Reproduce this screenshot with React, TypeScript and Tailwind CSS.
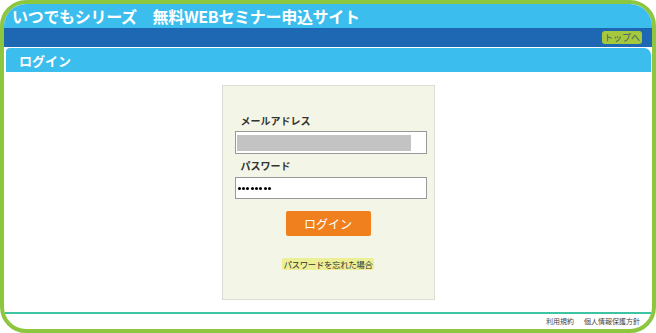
export default function App() {
  return (
    <div
      className="w-[656px] h-[333px] bg-white"
      style={{ fontFamily: '"Noto Sans CJK JP", "Noto Sans", sans-serif' }}
    >
      <div className="w-full h-full border-4 border-[#8dc63f] rounded-[26px] overflow-hidden flex flex-col bg-white">
        {/* title bar */}
        <div className="h-[24px] shrink-0 bg-[#3bbdee] pl-[8px] flex items-center">
          <h1 className="text-white font-bold text-[16px] leading-none tracking-[-0.3px]">
            いつでもシリーズ　無料WEBセミナー申込サイト
          </h1>
        </div>

        {/* nav bar */}
        <div className="h-[19px] shrink-0 bg-[#1e68b3] flex items-center justify-end pr-[10px]">
          <button className="h-[13px] px-[2px] rounded-[3px] bg-[#a6c83c] text-[#3a5a6a] text-[9px] leading-none">
            トップへ
          </button>
        </div>

        {/* tab */}
        <div className="h-[24px] shrink-0 mt-px ml-[2px] mr-px bg-[#3bbdee] rounded-tl-[4px] rounded-tr-[7px] flex items-center pl-[13px]">
          <span className="text-white font-bold text-[13px] leading-none">ログイン</span>
        </div>

        {/* content */}
        <div className="flex-1 flex justify-center pt-[13px]">
          <div className="w-[213px] h-[215px] bg-[#f3f6e6] border border-[#dddcd6] flex flex-col items-center pt-[28px]">
            <div className="w-[192px] ml-[5px]">
              <label className="block pl-[6px] text-[10px] font-bold text-[#333] leading-[14px]">
                メールアドレス
              </label>
              <div className="mt-[3px] h-[23px] bg-white border border-[#999] flex items-center px-px">
                <div className="w-[174px] h-[16px] bg-[#c3c3c3]" />
              </div>
              <label className="block mt-[5px] pl-[6px] text-[10px] font-bold text-[#333] leading-[14px]">
                パスワード
              </label>
              <div className="mt-[4px] h-[22px] bg-white border border-[#999] flex items-center pl-[2px] gap-[1.4px]">
                {Array.from({ length: 8 }).map((_, i) => (
                  <span key={i} className="w-[3px] h-[3px] rounded-full bg-black" />
                ))}
              </div>
            </div>

            <button className="mt-[12px] w-[85px] h-[25px] bg-[#f07f1e] rounded-[2px] text-white text-[12px] leading-none">
              ログイン
            </button>

            <a className="mt-[22px] px-[1px] h-[12px] bg-[#ecef96] rounded-[2px] text-[8.5px] text-[#333] leading-[12px] tracking-[-0.4px]">
              パスワードを忘れた場合
            </a>
          </div>
        </div>

        {/* footer */}
        <div className="shrink-0 mt-[12px] h-[2px] bg-[#3ec4a2]" />
        <div className="shrink-0 h-[15px] flex items-center justify-end pr-[12px] gap-[10px] text-[7px] text-[#444] leading-none">
          <span>利用規約</span>
          <span>個人情報保護方針</span>
        </div>
      </div>
    </div>
  );
}
